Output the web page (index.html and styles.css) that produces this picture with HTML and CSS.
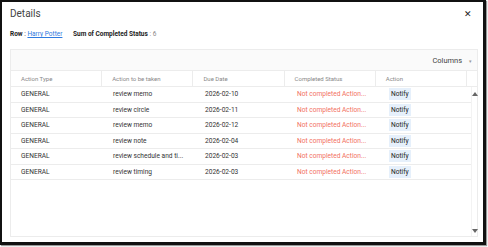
FILE: index.html
```html
<!DOCTYPE html>
<html lang="en">
<head>
    <meta charset="UTF-8">
    <title>Details</title>
    <link rel="stylesheet" href="styles.css">
</head>
<body>

    <div class="dialog">
        <!-- Title bar -->
        <div class="dialog-head">
            <span class="dialog-title">Details</span>
            <span class="dialog-close">&#x2715;</span>
        </div>

        <!-- Summary line -->
        <div class="summary">
            <span class="label">Row</span> : <a href="#" class="row-link">Harry Potter</a>
            <span class="label sum">Sum of Completed Status</span> <span class="muted">: 6</span>
        </div>

        <!-- Grid -->
        <div class="grid">
            <div class="grid-toolbar">
                <span class="columns-btn">Columns <span class="caret">&#9662;</span></span>
            </div>

            <div class="grid-header">
                <div class="cell">Action Type</div>
                <div class="cell">Action to be taken</div>
                <div class="cell">Due Date</div>
                <div class="cell">Completed Status</div>
                <div class="cell">Action</div>
                <div class="cell filler"></div>
            </div>

            <div class="grid-body">
                <div class="rows">
                    <div class="row">
                        <div class="cell">GENERAL</div>
                        <div class="cell">review memo</div>
                        <div class="cell">2026-02-10</div>
                        <div class="cell status">Not completed Action...</div>
                        <div class="cell"><span class="notify">Notify</span></div>
                    </div>
                    <div class="row">
                        <div class="cell">GENERAL</div>
                        <div class="cell">review circle</div>
                        <div class="cell">2026-02-11</div>
                        <div class="cell status">Not completed Action...</div>
                        <div class="cell"><span class="notify">Notify</span></div>
                    </div>
                    <div class="row">
                        <div class="cell">GENERAL</div>
                        <div class="cell">review memo</div>
                        <div class="cell">2026-02-12</div>
                        <div class="cell status">Not completed Action...</div>
                        <div class="cell"><span class="notify">Notify</span></div>
                    </div>
                    <div class="row">
                        <div class="cell">GENERAL</div>
                        <div class="cell">review note</div>
                        <div class="cell">2026-02-04</div>
                        <div class="cell status">Not completed Action...</div>
                        <div class="cell"><span class="notify">Notify</span></div>
                    </div>
                    <div class="row">
                        <div class="cell">GENERAL</div>
                        <div class="cell">review schedule and ti...</div>
                        <div class="cell">2026-02-03</div>
                        <div class="cell status">Not completed Action...</div>
                        <div class="cell"><span class="notify">Notify</span></div>
                    </div>
                    <div class="row">
                        <div class="cell">GENERAL</div>
                        <div class="cell">review timing</div>
                        <div class="cell">2026-02-03</div>
                        <div class="cell status">Not completed Action...</div>
                        <div class="cell"><span class="notify">Notify</span></div>
                    </div>
                </div>

                <!-- Scrollbar -->
                <div class="scrollbar">
                    <span class="arrow up"></span>
                    <span class="arrow down"></span>
                </div>
            </div>
        </div>
    </div>

</body>
</html>
```

FILE: styles.css
```css
:root {
    --frame-color: #111;
    --txt-color: #333;
    --muted-color: #888;
    --line-color: #ececec;
    --link-color: #2f7be0;
    --status-color: #f2705f;
    --notify-bg: #e6f0fb;
}

body {
    font-family: Roboto, 'Liberation Sans', sans-serif;
    margin: 0;
    padding: 0;
    background-color: #fff;
    width: 488px;
    height: 247px;
}

.dialog {
    box-sizing: border-box;
    width: 486px;
    height: 245px;
    border-style: solid;
    border-color: var(--frame-color);
    border-width: 2px 3px 3px 2px;
    box-shadow: 1px 1px 1px #999;
    background-color: #fff;
    display: flex;
    flex-direction: column;
    padding: 0 5px 5px 8px;
}

.dialog-head {
    display: flex;
    justify-content: space-between;
    align-items: center;
    height: 23px;
}

.dialog-title {
    font-size: 10px;
    color: #444;
}

.dialog-close {
    font-size: 8.5px;
    color: #222;
    margin-right: 6px;
}

.summary {
    font-size: 6.5px;
    color: var(--txt-color);
    margin-top: 5px;
    height: 19px;
}

.summary .label {
    font-weight: bold;
    color: #222;
}

.summary .sum {
    margin-left: 9px;
}

.row-link {
    color: var(--link-color);
    text-decoration: underline;
}

.muted {
    color: var(--muted-color);
}

.grid {
    flex: 1;
    border: 1px solid var(--line-color);
    display: flex;
    flex-direction: column;
    font-size: 6.6px;
    color: var(--txt-color);
}

.grid-toolbar {
    height: 20px;
    background-color: #fafafa;
    border-bottom: 1px solid var(--line-color);
    display: flex;
    align-items: center;
    justify-content: flex-end;
    padding-right: 5px;
}

.columns-btn {
    font-size: 7.5px;
    color: #444;
}

.caret {
    font-size: 5px;
    color: #999;
    margin-left: 5px;
}

.grid-header {
    display: flex;
    height: 15px;
    border-bottom: 1px solid var(--line-color);
    color: var(--muted-color);
    font-size: 6px;
}

.grid-header .cell {
    border-right: 1px solid var(--line-color);
}

.cell {
    box-sizing: border-box;
    width: 92px;
    padding-left: 10px;
    display: flex;
    align-items: center;
    white-space: nowrap;
    overflow: hidden;
}

.grid-header .filler {
    width: auto;
    flex: 1;
    border-right: none;
}

.grid-body {
    flex: 1;
    display: flex;
}

.rows {
    width: 460px;
}

.row {
    display: flex;
    height: 15.5px;
    border-bottom: 1px solid var(--line-color);
    box-sizing: border-box;
}

.status {
    color: var(--status-color);
}

.notify {
    background-color: var(--notify-bg);
    color: #222;
    padding: 2px 2px;
    font-size: 6.6px;
}

.scrollbar {
    flex: 1;
    border-left: 1px solid #f3f3f3;
    display: flex;
    flex-direction: column;
    justify-content: space-between;
    align-items: center;
    padding: 5px 0 3px;
}

.arrow {
    width: 0;
    height: 0;
    border-left: 3px solid transparent;
    border-right: 3px solid transparent;
}

.arrow.up {
    border-bottom: 4px solid #666;
}

.arrow.down {
    border-top: 4px solid #666;
}
```
